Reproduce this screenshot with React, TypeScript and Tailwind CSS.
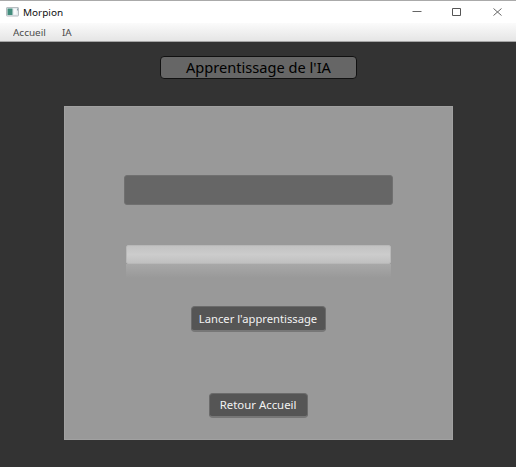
function TitleBar() {
  return (
    <header className="flex h-[23px] items-center border-t border-[#aaaaaa] bg-white pl-[6px]">
      <svg width="13" height="10" viewBox="0 0 13 10" className="mr-[4px] mb-px">
        <rect x=".5" y=".5" width="12" height="8.5" rx=".5" fill="#e6ecef" stroke="#b6bcc0" />
        <rect x="1.5" y="1.5" width="5" height="6.5" fill="#438d7d" />
        <rect x="8" y="2" width="2.5" height="5.5" fill="#f8fafb" />
        <path d="M11.5 1.5v2" stroke="#8da3ad" />
      </svg>
      <span className="origin-left scale-x-[1.03] pt-px text-[9.7px] leading-none text-[#111111]">Morpion</span>
      <div className="ml-auto flex items-center">
        <svg width="110" height="12" viewBox="0 0 110 12" fill="none" stroke="#666666">
          <path d="M6.5 5.5h9" />
          <path d="M46.5 2.5h8v7h-8z" stroke="#555555" />
          <path d="m87.5 2.5 8 7m0-7-8 7" />
        </svg>
      </div>
    </header>
  );
}

function MenuBar() {
  return (
    <nav className="flex h-[19px] items-center gap-[18.5px] border-b border-[#a5a5a5] bg-linear-to-b from-[#fbfbfb] to-[#e5e5e5] pt-px pl-[13px] text-[9.3px] leading-none text-[#4c4c4c]">
      <span className="origin-left scale-x-[1.07]">Accueil</span>
      <span className="origin-left scale-x-[1.07]">IA</span>
    </nav>
  );
}

export default function App() {
  return (
    <div className="flex h-[467px] w-[516px] flex-col overflow-hidden bg-[#333333] font-['Noto_Sans','Open_Sans',sans-serif]">
      <TitleBar />
      <MenuBar />
      <main className="flex flex-col items-center">
        <h1 className="mt-[14px] flex h-[23px] w-[197px] items-center justify-center rounded-[4px] border border-[#111111] bg-[#666666] text-[13.6px] leading-none whitespace-nowrap text-black">
          <span className="scale-x-[1.075]">Apprentissage de l'IA</span>
        </h1>
        <section className="mt-[27px] flex h-[334px] w-[389px] flex-col items-center border border-[#a1a1a1] bg-[#999999]">
          <div className="mt-[68px] h-[30px] w-[269px] rounded-[3px] border border-[#707070] bg-[#666666]" />
          <div className="mt-[40px] h-[19px] w-[265px] rounded-[2px] border border-[#b8b8b8] bg-linear-to-b from-[#c2c2c2] via-[#cccccc] to-[#c0c0c0]" />
          <div className="h-[14px] w-[265px] bg-linear-to-b from-[#a8a8a8] to-[#999999]" />
          <button className="mt-[28px] flex h-[26px] w-[135px] items-center justify-center rounded-[4px] border border-b-2 border-[#6b6b6b] border-b-[#777777] bg-[#555555] text-[11px] leading-none whitespace-nowrap text-[#f2f2f2]">
            <span className="scale-x-[1.02]">Lancer l'apprentissage</span>
          </button>
          <button className="mt-[61px] flex h-[25px] w-[99px] items-center justify-center rounded-[4px] border border-b-2 border-[#6b6b6b] border-b-[#777777] bg-[#555555] text-[11px] leading-none whitespace-nowrap text-[#f2f2f2]">
            <span className="scale-x-[1.035] pb-[2px] pl-px">Retour Accueil</span>
          </button>
        </section>
      </main>
    </div>
  );
}
